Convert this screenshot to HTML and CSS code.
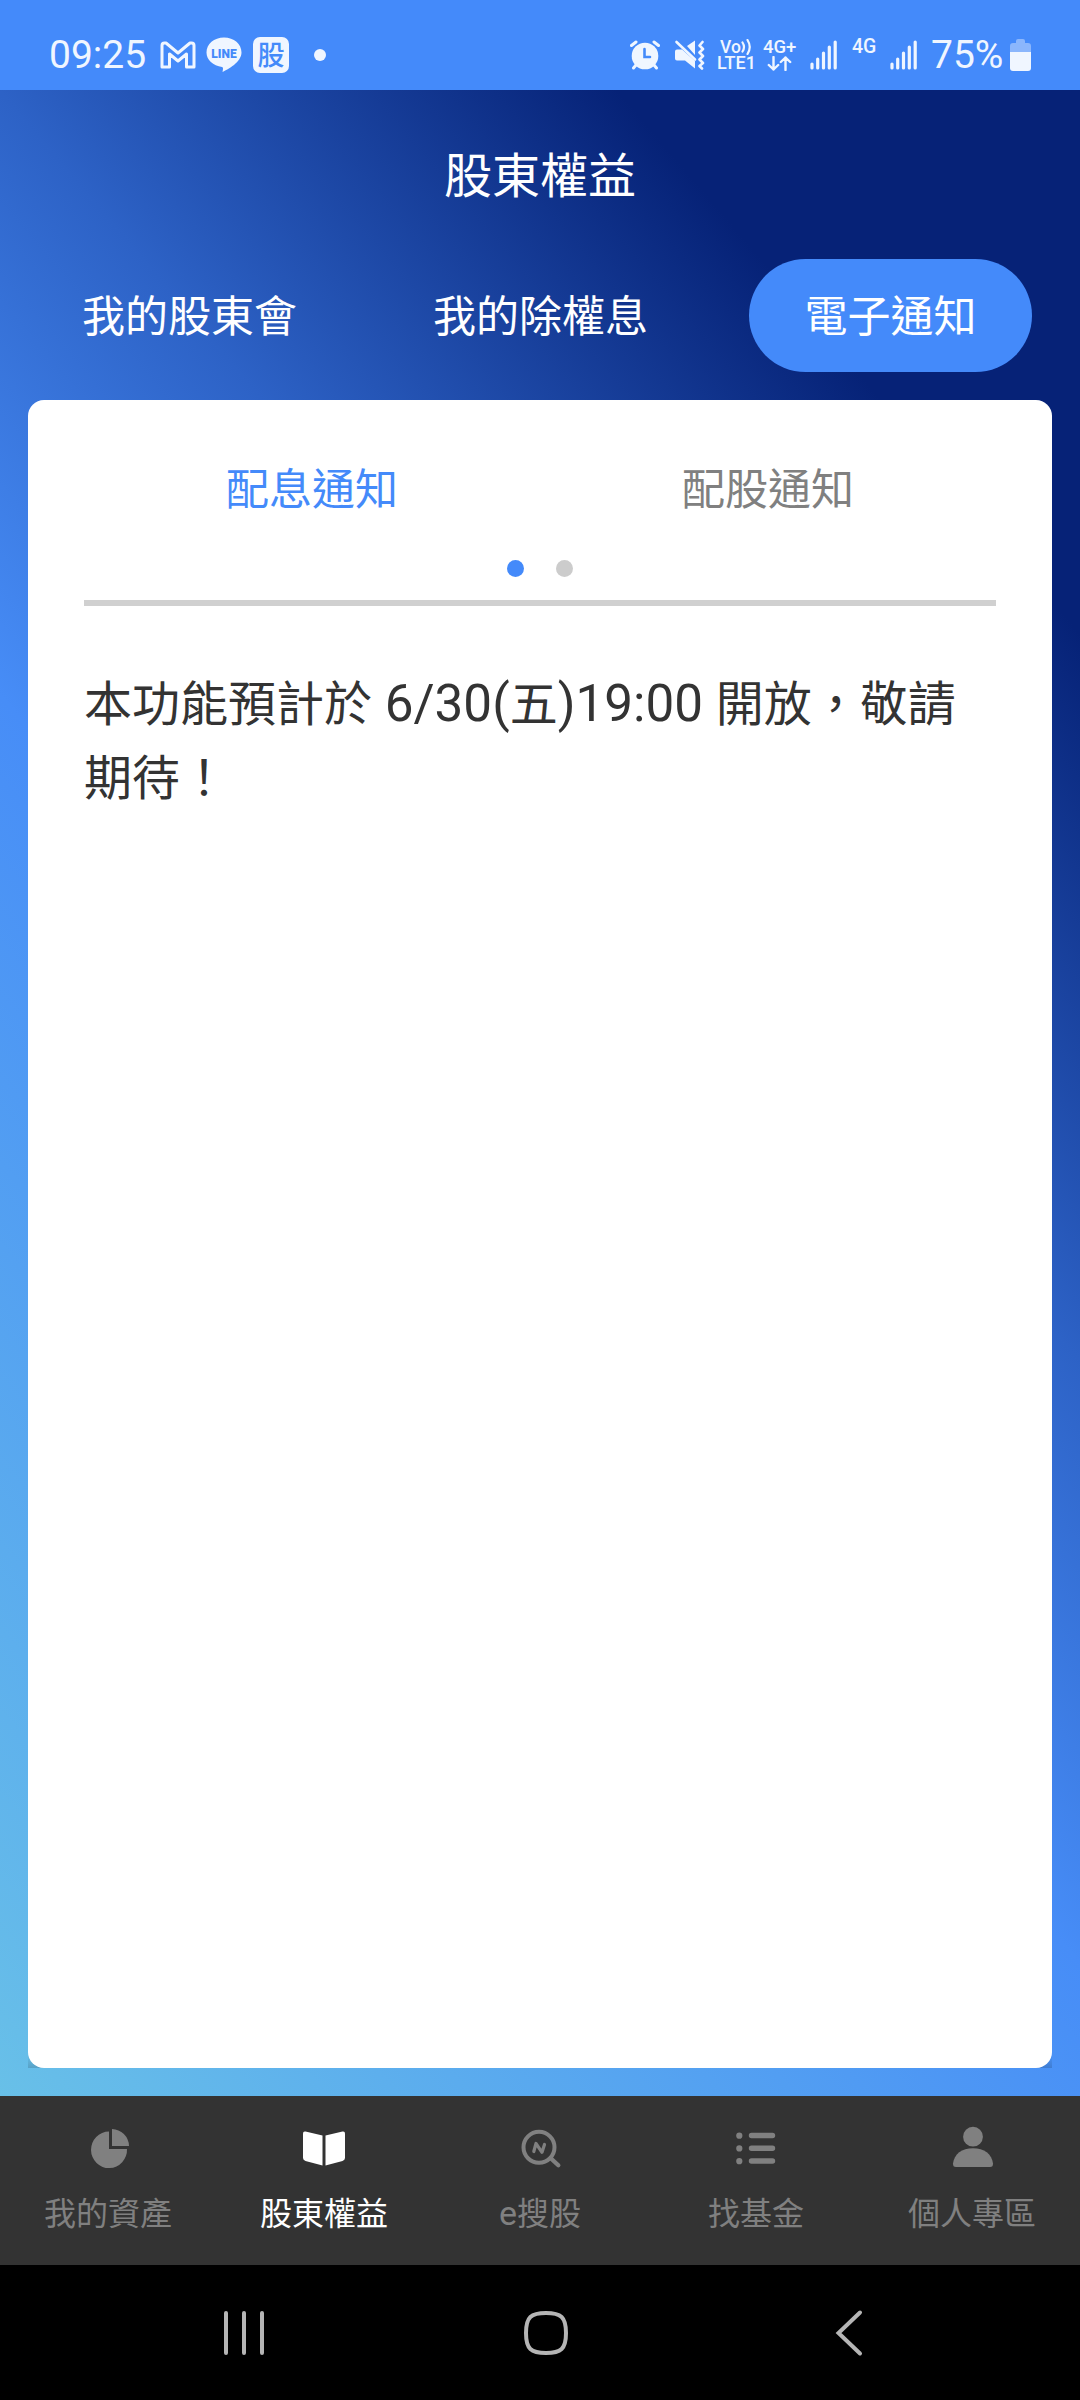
FILE: index.html
```html
<!DOCTYPE html>
<html lang="zh-Hant">
	<head>
		<meta charset="utf-8">
		<title>股東權益</title>
		<link rel="stylesheet" href="styles.css">
	</head>
	<body>
		<div class="wrap">
			<!--系統狀態列-->
			<header class="status">
				<div class="status-left">
					<span class="time">09:25</span>
					<svg class="ico-mail" width="36" height="28" viewBox="0 0 36 28"><path d="M2 4.500Q2 2 4.500 2H6L18 12L30 2H31.500Q34 2 34 4.500V26H26.500V13L18 20L9.500 13V26H2Z" fill="none" stroke="#f0f6ff" stroke-width="3" stroke-linejoin="round"/></svg>
					<svg class="ico-line" width="36" height="36" viewBox="0 0 36 36"><path d="M18 0.500C8 0.500 0.500 7 0.500 15.500C0.500 23 7 28.500 16 30C17.500 30.500 17 32 16.500 35C22 32.500 35.500 25 35.500 15.500C35.500 7 28 0.500 18 0.500Z" fill="#f0f6ff"/><text x="18" y="20.500" text-anchor="middle" class="line-text">LINE</text></svg>
					<span class="stock">股</span>
					<span class="more"></span>
				</div>
				<div class="status-right">
					<svg class="ico-alarm" width="30" height="30" viewBox="0 0 30 30"><circle cx="15" cy="16" r="13.300" fill="#f0f6ff"/><path d="M1.500 5.500L6 2M28.500 5.500L24 2M6 25L3.500 28M24 25L26.500 28" stroke="#f0f6ff" stroke-width="3" stroke-linecap="round"/><path d="M14.500 9V17H20" fill="none" stroke="#448afa" stroke-width="2.600" stroke-linecap="round"/></svg>
					<svg class="ico-mute" width="32" height="30" viewBox="0 0 32 30"><path d="M3 9.500H8L21 21V28.500L11 20.500H3Q1 20.500 1 18.500V11.500Q1 9.500 3 9.500ZM13 6L21 0.500V15Z" fill="#f0f6ff"/><path d="M2.500 2L21 19.500" stroke="#f0f6ff" stroke-width="2.600" stroke-linecap="round"/><path d="M28.500 2L25.500 5.500L29 9L25.500 12.500L29 16L25.500 19.500L29 23L25.500 26L28 28.500" fill="none" stroke="#f0f6ff" stroke-width="2.600" stroke-linecap="round" stroke-linejoin="round"/></svg>
					<div class="volte">
						<span class="vo">Vo<svg width="11" height="16" viewBox="0 0 11 16"><path d="M1.500 3.500Q4.500 8 1.500 12.500M6.500 1Q11 8 6.500 15" fill="none" stroke="#f0f6ff" stroke-width="2.200" stroke-linecap="round"/></svg></span>
						<span class="lte">LTE1</span>
					</div>
					<div class="net">
						<span>4G+</span>
						<svg width="26" height="15" viewBox="0 0 26 15"><path d="M6.500 1V13.500M1.800 9L6.500 13.500L11.200 9M18.500 14V1.500M13.800 6L18.500 1.500L23.200 6" fill="none" stroke="#f0f6ff" stroke-width="2.400" stroke-linecap="round" stroke-linejoin="round"/></svg>
					</div>
					<svg class="signal" width="28" height="30" viewBox="0 0 28 30"><path d="M2 24V28M7.700 19V28M13.500 13V28M19.300 7V28M25.200 2V28" stroke="#f0f6ff" stroke-width="3.200" stroke-linecap="round"/></svg>
					<span class="g4">4G</span>
					<svg class="signal" width="28" height="30" viewBox="0 0 28 30"><path d="M2 24V28M7.700 19V28M13.500 13V28M19.300 7V28M25.200 2V28" stroke="#f0f6ff" stroke-width="3.200" stroke-linecap="round"/></svg>
					<span class="percent">75%</span>
					<svg class="battery" width="21" height="32" viewBox="0 0 21 32"><path d="M6 2Q6 0 8 0H13Q15 0 15 2V4H18Q21 4 21 7V13H0V7Q0 4 3 4H6Z" fill="#8bb6fc"/><path d="M0 13H21V29Q21 32 18 32H3Q0 32 0 29Z" fill="#f0f6ff"/></svg>
				</div>
			</header>

			<div class="main">
				<h1 class="title">股東權益</h1>
				<nav class="tabs">
					<a class="tab">我的股東會</a>
					<a class="tab">我的除權息</a>
					<a class="tab active">電子通知</a>
				</nav>
				<div class="card-wrap">
					<div class="card">
						<div class="sub-tabs">
							<span class="on">配息通知</span>
							<span>配股通知</span>
						</div>
						<div class="dots"><i class="on"></i><i></i></div>
						<p class="msg">本功能預計於<b> 6/30(</b>五<b>)19:00 </b>開放，敬請<br>期待！</p>
					</div>
				</div>
			</div>

			<!--底部選單-->
			<nav class="menu">
				<a class="item">
					<svg width="48" height="48" viewBox="0 0 48 48" fill="#808080"><path d="M25 7.500V25H43A18 18.300 0 1 1 25 7.500Z"/><path d="M28 5A17.500 17.500 0 0 1 45 22H28Z"/></svg>
					<span>我的資產</span>
				</a>
				<a class="item active">
					<svg width="48" height="48" viewBox="0 0 48 48" fill="#fff"><path d="M3 9.500Q3 7 5.500 7.500L22.500 11.500V41.500L5.500 37Q3 36.200 3 34Z"/><path d="M45 9.500Q45 7 42.500 7.500L25.500 11.500V41.500L42.500 37Q45 36.200 45 34Z"/></svg>
					<span>股東權益</span>
				</a>
				<a class="item">
					<svg width="48" height="48" viewBox="0 0 48 48" fill="none" stroke="#808080" stroke-linecap="round" stroke-linejoin="round"><circle cx="23" cy="23.300" r="15.500" stroke-width="4"/><path d="M35 34.500L42.300 41.300" stroke-width="4.300"/><path d="M17.800 27.500L20 19.500L26 28.300L28.500 20.500" stroke-width="3.200"/></svg>
					<span><b>e</b>搜股</span>
				</a>
				<a class="item">
					<svg width="48" height="48" viewBox="0 0 48 48" stroke="#808080" stroke-linecap="round"><path d="M7.300 11.500V11.700M7.300 24.300V24.500M7.300 37V37.200" stroke-width="6.200"/><path d="M19.500 11.500H40.500M19.500 24.300H40.500M19.500 37H40.500" stroke-width="5.400"/></svg>
					<span>找基金</span>
				</a>
				<a class="item">
					<svg width="48" height="48" viewBox="0 0 48 48" fill="#808080"><circle cx="25" cy="12.700" r="9.900"/><path d="M5 39.500C6 30 14 24.200 25 24.200S44 30 45 39.500Q45.200 43 42 43H8Q4.800 43 5 39.500Z"/></svg>
					<span>個人專區</span>
				</a>
			</nav>

			<!--系統導覽列-->
			<footer class="keys">
				<svg class="recent" width="44" height="48" viewBox="0 0 44 48"><path d="M4 4V44M22 4V44M40 4V44" stroke="#b5b5b5" stroke-width="4" stroke-linecap="round"/></svg>
				<svg class="home" width="48" height="48" viewBox="0 0 48 48"><path d="M24 4C39 4 44 8 44 24S39 44 24 44S4 40 4 24S9 4 24 4Z" fill="none" stroke="#b5b5b5" stroke-width="4"/></svg>
				<svg class="back" width="30" height="48" viewBox="0 0 30 48"><path d="M26 3.500L4.500 24L26 44.500" fill="none" stroke="#b5b5b5" stroke-width="4" stroke-linecap="round"/></svg>
			</footer>
		</div>
	</body>
</html>
```
FILE: styles.css
```css
body,html{
	margin: 0;
}
svg{
	display: block;
	flex: none;
}
b{
	font-weight: normal;
}
.wrap{
	width: 1080px;
	height: 2400px;
	font-family: Roboto, "Noto Sans CJK TC", sans-serif;
	overflow: hidden;
}
.status{
	box-sizing: border-box;
	display: flex;
	justify-content: space-between;
	height: 90px;
	padding: 0 49px;
	background: #448afa;
	color: #f0f6ff;
}
.status-left,.status-right{
	display: flex;
	align-items: center;
	height: 110px;
}
.time{
	width: 98px;
	font-size: 39px;
	line-height: 40px;
	white-space: nowrap;
}
.ico-mail{
	margin-left: 13px;
}
.ico-line{
	margin-left: 10px;
}
.line-text{
	font: 900 12px Roboto, sans-serif;
	fill: #448afa;
}
.stock{
	width: 36px;
	height: 36px;
	margin-left: 11px;
	border-radius: 7px;
	background: #f0f6ff;
	color: #448afa;
	font: 500 27px/34px "Noto Sans CJK TC", sans-serif;
	text-align: center;
}
.more{
	width: 12px;
	height: 12px;
	margin-left: 25px;
	border-radius: 50%;
	background: #f0f6ff;
}
.ico-mute{
	margin-left: 14px;
}
.volte{
	width: 38px;
	margin-left: 11px;
	font-weight: 500;
}
.vo{
	display: flex;
	align-items: center;
	height: 16px;
	padding-left: 3px;
	font-size: 17.500px;
}
.lte{
	display: block;
	font-size: 18px;
	line-height: 16px;
}
.net{
	width: 36px;
	margin-left: 8px;
	font-size: 18.500px;
	font-weight: 500;
	line-height: 17px;
}
.net svg{
	margin-left: 4px;
}
.signal{
	margin-left: 11px;
}
.g4{
	width: 25px;
	margin: -17px 2px 0 14px;
	font-size: 19.500px;
	font-weight: 500;
	line-height: 20px;
}
.percent{
	width: 73px;
	margin-left: 13px;
	font-size: 39px;
	line-height: 40px;
}
.battery{
	margin-left: 6px;
}

.main{
	box-sizing: border-box;
	height: 2006px;
	padding: 0 28px 28px;
	background: linear-gradient(229.600deg, #062277 0%, #062277 16.600%, #2d62c6 38.800%, #478df7 57.200%, #68c0e8 100%);
}
.title{
	margin: 0;
	padding-top: 52px;
	color: #fff;
	font-size: 48px;
	font-weight: normal;
	line-height: 70px;
	text-align: center;
}
.tabs{
	display: flex;
	justify-content: space-between;
	margin: 47px 20px 28px 19px;
}
.tab{
	box-sizing: border-box;
	height: 113px;
	padding: 0 35px;
	color: #fff;
	font-size: 43px;
	line-height: 117px;
}
.tab.active{
	width: 283px;
	padding: 0;
	border-radius: 57px;
	background: #448afa;
	text-align: center;
}
.card-wrap{
	background: linear-gradient(transparent 1655px, rgba(0,0,0,0.15) 1668px);
}
.card{
	box-sizing: border-box;
	height: 1668px;
	padding: 58px 56px 0;
	border-radius: 16px;
	background: #fff;
}
.sub-tabs{
	display: flex;
	color: #808080;
	font-size: 43px;
	line-height: 64px;
}
.sub-tabs span{
	flex: 1;
	text-align: center;
}
.sub-tabs .on{
	color: #448afa;
}
.dots{
	display: flex;
	justify-content: center;
	gap: 32px;
	padding: 38px 0 23px;
	border-bottom: 6px solid #d0d0d0;
}
.dots i{
	width: 17px;
	height: 17px;
	border-radius: 50%;
	background: #ccc;
}
.dots .on{
	background: #448afa;
}
.msg{
	margin: 62px 0 0;
	color: #333;
	font-size: 48px;
	line-height: 74px;
}
.msg b{
	font-size: 51.200px;
	line-height: 1;
}

.menu{
	display: flex;
	height: 169px;
	background: #333;
}
.item{
	flex: 1;
	display: flex;
	flex-direction: column;
	align-items: center;
	padding-top: 28px;
	color: #808080;
	font-size: 32px;
	line-height: 46px;
}
.item span{
	margin-top: 19px;
}
.item b{
	font-size: 34px;
	line-height: 1;
}
.item.active{
	color: #fff;
}
.keys{
	display: flex;
	align-items: center;
	height: 135px;
	background: #000;
}
.recent{
	margin-left: 222px;
}
.home{
	margin-left: 256px;
}
.back{
	margin-left: 264px;
}
```
